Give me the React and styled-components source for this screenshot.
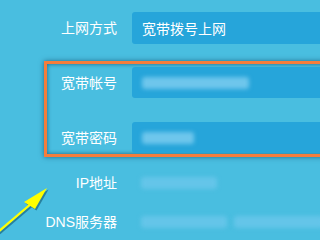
import React from 'react';
import styled, { createGlobalStyle } from 'styled-components';

const GlobalStyle = createGlobalStyle`
  html, body {
    margin: 0;
    padding: 0;
    background: #49bee0;
  }
  body {
    font-family: "Liberation Sans", "Noto Sans CJK SC", sans-serif;
  }
`;

const Page = styled.div`
  position: relative;
  width: 320px;
  height: 240px;
  overflow: hidden;
  padding-top: 12px;
  box-sizing: border-box;
  background: #49bee0;
`;

const Row = styled.div`
  display: grid;
  grid-template-columns: ${(p) => p.labelWidth || 117}px 1fr;
  column-gap: 15px;
  align-items: center;
  height: ${(p) => p.h || 32}px;
  margin-top: ${(p) => p.top || 0}px;
`;

const Label = styled.div`
  text-align: right;
  color: #ffffff;
  font-size: 14px;
  line-height: 16px;
  white-space: nowrap;
`;

const Field = styled.div`
  display: flex;
  align-items: center;
  height: 100%;
  margin-right: -20px;
  padding-left: 10px;
  border-radius: 3px;
  background: #26a5da;
  color: #ffffff;
  font-size: 14px;
`;

const Plain = styled.div`
  display: flex;
  align-items: center;
  gap: 7px;
  height: 100%;
  padding-left: 9px;
`;

const Highlight = styled.div`
  margin: 17px -20px 0 44px;
  padding: 3px 0 1px;
  border: 3px solid #f67d3b;
  box-shadow: 0 0 5px rgba(0, 40, 70, 0.55), inset 0 0 4px rgba(0, 40, 70, 0.6);
  display: flex;
  flex-direction: column;
  gap: 24px;
`;

const Smudge = styled.div`
  width: ${(p) => p.w}px;
  height: ${(p) => p.h || 12}px;
  border-radius: 3px;
  background: ${(p) => p.tone || '#6ec6ec'};
  filter: blur(2px);
`;

const Arrow = styled.svg`
  position: absolute;
  left: 0;
  top: 180px;
  overflow: visible;
`;

export default function App() {
  return (
    <>
      <GlobalStyle />
      <Page>
        <Row>
          <Label>上网方式</Label>
          <Field>宽带拨号上网</Field>
        </Row>

        <Highlight>
          <Row labelWidth={70} h={31}>
            <Label>宽带帐号</Label>
            <Field>
              <Smudge w={107} />
            </Field>
          </Row>
          <Row labelWidth={70} h={31}>
            <Label>宽带密码</Label>
            <Field>
              <Smudge w={52} />
            </Field>
          </Row>
        </Highlight>

        <Row top={10}>
          <Label>IP地址</Label>
          <Plain>
            <Smudge w={76} tone="#64c5e9" />
          </Plain>
        </Row>
        <Row top={7}>
          <Label>DNS服务器</Label>
          <Plain>
            <Smudge w={86} tone="#64c5e9" />
            <Smudge w={90} tone="#64c5e9" />
          </Plain>
        </Row>

        <Arrow width="60" height="60" viewBox="0 0 60 60">
          <g transform="translate(1.5,1.5)" opacity="0.45">
            <line x1="-2" y1="52" x2="32" y2="23" stroke="#003850" strokeWidth="2.2" />
            <polygon points="47,8 24,22 35,29" fill="#003850" />
          </g>
          <line x1="-2" y1="52" x2="32" y2="23" stroke="#ffff00" strokeWidth="2.2" />
          <polygon points="47,8 24,22 35,29" fill="#ffff00" />
        </Arrow>
      </Page>
    </>
  );
}
